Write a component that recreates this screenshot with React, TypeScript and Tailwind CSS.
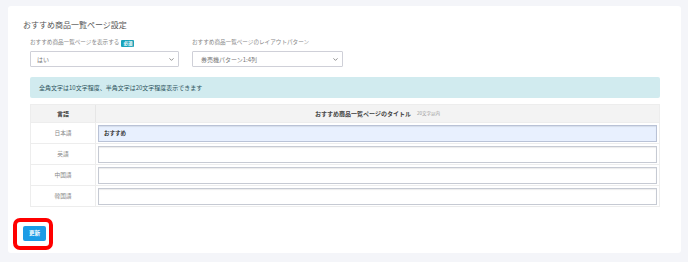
import React from 'react';
import { ChevronDown } from 'lucide-react';

const rows = [
  { lang: '日本語', value: 'おすすめ', filled: true },
  { lang: '英語', value: '', filled: false },
  { lang: '中国語', value: '', filled: false },
  { lang: '韓国語', value: '', filled: false },
];

const App: React.FC = () => {
  return (
    <div
      className="w-[688px] h-[262px] bg-[#f4f5f9] pt-[6px] pl-[8px]"
      style={{ fontFamily: '"Noto Sans CJK JP", "Noto Sans", sans-serif' }}
    >
      <div className="w-[673px] h-[247px] bg-white rounded-[3px] pt-[11px] pl-[15px]">
        {/* Title */}
        <h2 className="h-[16px] leading-[16px] text-[8px] text-[#555]">おすすめ商品一覧ページ設定</h2>

        <div className="ml-[7px] w-[630px]">
          {/* Selects */}
          <div className="flex gap-[13px] mt-[5px]">
            <div className="w-[149px]">
              <div className="h-[10px] flex items-center text-[5.6px] text-[#888] leading-none">
                <span>おすすめ商品一覧ページを表示する</span>
                <span className="ml-[2px] px-[2px] h-[7px] flex items-center bg-[#1aa3ba] text-white text-[4.5px] font-bold rounded-[1px]">
                  必須
                </span>
              </div>
              <div className="mt-[3px] h-[16px] border border-[#cfd0d8] rounded-[1px] flex items-center justify-between pl-[6px] pr-[3px]">
                <span className="text-[6px] text-[#777]">はい</span>
                <ChevronDown size={7} strokeWidth={2.5} className="text-[#666]" />
              </div>
            </div>
            <div className="w-[151px]">
              <div className="h-[10px] flex items-center text-[5.6px] text-[#888] leading-none">
                おすすめ商品一覧ページのレイアウトパターン
              </div>
              <div className="mt-[3px] h-[16px] border border-[#cfd0d8] rounded-[1px] flex items-center justify-between pl-[8px] pr-[3px]">
                <span className="text-[6px] text-[#777]">券売機パターン1:4列</span>
                <ChevronDown size={7} strokeWidth={2.5} className="text-[#666]" />
              </div>
            </div>
          </div>

          {/* Info */}
          <div className="mt-[10px] h-[21px] bg-[#d1ebef] rounded-[2px] flex items-center pl-[9px] text-[6px] text-[#2f5560]">
            全角文字は10文字程度、半角文字は20文字程度表示できます
          </div>

          {/* Table */}
          <div className="mt-[6px] border border-[#ededed]">
            <div className="flex h-[17px] bg-[#f3f3f3]">
              <div className="w-[65px] border-r border-[#e6e6e6] flex items-center justify-center text-[6px] font-bold text-[#444]">
                言語
              </div>
              <div className="flex-1 flex items-center justify-center text-[6px] font-bold text-[#444]">
                おすすめ商品一覧ページのタイトル
                <span className="ml-[6px] text-[4.5px] font-normal text-[#999]">20文字以内</span>
              </div>
            </div>
            {rows.map((row) => (
              <div key={row.lang} className="flex h-[21px] border-t border-[#ededed]">
                <div className="w-[65px] border-r border-[#ededed] flex items-center justify-center text-[5.7px] text-[#8a8a8a]">
                  {row.lang}
                </div>
                <div className="flex-1 flex items-center px-[2px]">
                  <div
                    className={`w-full h-[17px] border flex items-center pl-[5px] text-[5.5px] font-bold text-[#333] shadow-[inset_0_1px_1px_rgba(0,0,0,0.08)] ${
                      row.filled ? 'bg-[#e8f0fe] border-[#b9c2d6]' : 'bg-white border-[#c6cad3]'
                    }`}
                  >
                    {row.value}
                  </div>
                </div>
              </div>
            ))}
          </div>
        </div>

        {/* Update button with highlight */}
        <div className="relative mt-[19px] w-[23px] h-[15px]">
          <button className="w-[23px] h-[15px] bg-[#1c9ce6] rounded-[2px] text-white text-[5.5px] font-bold flex items-center justify-center">
            更新
          </button>
          <div className="absolute -left-[10px] -top-[8px] w-[40px] h-[32px] border-[4px] border-[#ff0000] rounded-[7px]" />
        </div>
      </div>
    </div>
  );
};

export default App;
